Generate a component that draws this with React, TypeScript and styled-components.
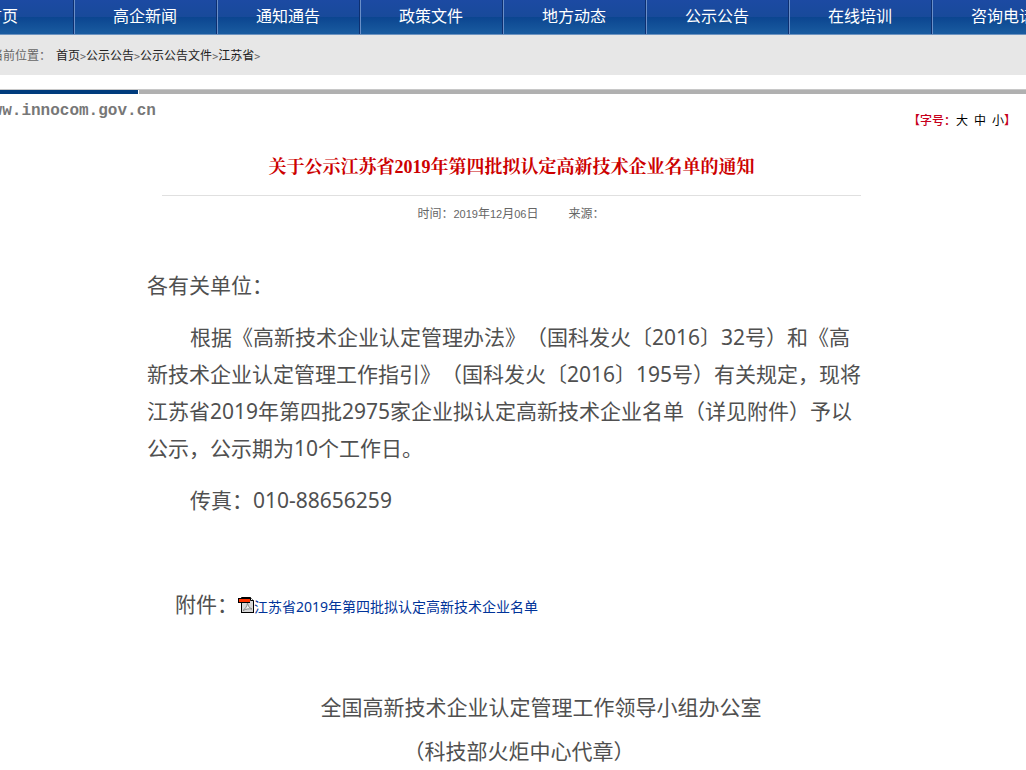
import React from "react";
import styled, { createGlobalStyle } from "styled-components";

const GlobalStyle = createGlobalStyle`
  * { box-sizing: border-box; }
  html { overflow: hidden; }
  body {
    margin: 0;
    background: #fff;
    color: #505050;
    font-family: "Noto Sans", "Noto Sans CJK SC", sans-serif;
    font-size: 12px;
    text-spacing-trim: space-all;
  }
`;

const Page = styled.div`
  overflow: hidden;
`;

const SiteHeader = styled.header`
  margin-left: -69px;
`;

const Nav = styled.nav`
  display: flex;
  height: 35px;
  overflow: hidden;
  background: linear-gradient(#1c4aa3 0, #184a9a 17px, #0b4590 17px, #1a5ca0 34px);
  border-bottom: 1px solid #6d93c0;
`;

const NavLink = styled.a`
  flex: 0 0 143px;
  height: 34px;
  padding-right: 1px;
  border-left: 1px solid #6a8fc8;
  border-right: 1px solid #0d2f70;
  color: #fff;
  font-family: "Noto Sans CJK SC", sans-serif;
  font-size: 16px;
  line-height: 30px;
  text-align: center;
  text-decoration: none;
`;

const Breadcrumb = styled.nav`
  display: flex;
  align-items: baseline;
  height: 40px;
  padding-left: 60px;
  background: #e7e7e7;
  color: #666;
  font-family: "Noto Sans CJK SC", sans-serif;
  font-size: 12px;
  line-height: 40px;
`;

const CrumbLabel = styled.span`
  margin-right: 5px;
`;

const CrumbLink = styled.a`
  color: #222;
  text-decoration: none;
`;

const CrumbArrow = styled.span`
  font-family: "DejaVu Sans Mono", monospace;
  font-size: 10px;
`;

const Rule = styled.div`
  display: flex;
  height: 5px;
  margin-top: 14px;
  border-top: 1px solid #c8c8c8;
  background: #b0b0b0;
`;

const RuleAccent = styled.div`
  flex: 0 0 208px;
  background: #003c7d;
  border-right: 1px solid #fff;
`;

const SiteAddress = styled.div`
  height: 16px;
  padding-left: 52px;
  color: #777;
  font-family: "Liberation Mono", monospace;
  font-size: 16px;
  font-weight: 700;
  line-height: 34px;
`;

const SizePicker = styled.div`
  display: flex;
  justify-content: flex-end;
  padding-right: 10px;
  color: #c7001c;
  font-family: "Noto Sans CJK SC", sans-serif;
  font-size: 12px;
  line-height: 20px;
`;

const SizeLabel = styled.span`
  font-weight: 500;
`;

const SizeOptions = styled.span`
  display: flex;
  gap: 6px;
`;

const SizeButton = styled.button`
  padding: 0;
  border: 0;
  background: none;
  color: #000;
  font: inherit;
  cursor: pointer;
`;

const Article = styled.article`
  max-width: 732px;
  margin: 0 auto;
`;

const Title = styled.h1`
  margin: 22px 18px 0 15px;
  padding-bottom: 13px;
  border-bottom: 1px solid #e0e0e0;
  color: #c00;
  font-family: "Liberation Serif", "Noto Serif CJK SC", "Noto Sans CJK SC", serif;
  font-size: 18px;
  font-weight: 700;
  line-height: 30px;
  text-align: center;
`;

const Meta = styled.div`
  display: flex;
  justify-content: center;
  gap: 30px;
  margin-bottom: 43px;
  padding: 7px 4px 0 0;
  color: #666;
  font-family: "Noto Sans CJK SC", sans-serif;
  line-height: 20px;
`;

const Num = styled.span`
  font-family: "Liberation Sans", sans-serif;
  font-size: 11px;
`;

const Paragraph = styled.p<{ $indent?: boolean }>`
  max-width: 720px;
  margin: 0 0 15px;
  font-size: 21px;
  line-height: 37px;
  text-indent: ${(p) => (p.$indent ? "43px" : "0")};
`;

const Attachment = styled.p`
  display: flex;
  align-items: center;
  margin: 67px 0 66px;
  padding-left: 28px;
  font-size: 21px;
  line-height: 37px;
`;

const FileLink = styled.a`
  display: flex;
  align-items: center;
  color: #003399;
  font-size: 14px;
  line-height: 20px;
  text-decoration: none;
`;

const FileName = styled.span`
  padding-top: 4px;
`;

const Signature = styled.div<{ $shift: number }>`
  padding-left: ${(p) => p.$shift}px;
  margin-bottom: 7px;
  font-size: 21px;
  line-height: 37px;
  text-align: center;
`;

const PdfIcon = () => (
  <svg width="16" height="16" viewBox="0 0 16 16" aria-hidden="true">
    <path d="M3.5 .5h9l3 3v12h-12z" fill="#d8d8d8" stroke="#000" />
    <path d="M12.500 .5v3h3" fill="#fff" stroke="#000" />
    <path d="M5 13.500c2-1.500 4-4 4.500-7.500 .5 3 2 5 4.500 6-3-.5-6 0-9 1.500" fill="#f2f2f2" stroke="#888" />
    <path d="M0 1h12v5h-12z" fill="#000" />
    <path d="M1 2h11v3h-11z" fill="#ff3300" />
    <path d="M3 15.500h13M15.500 4v12" stroke="#000" />
  </svg>
);

const navItems = ["首页", "高企新闻", "通知通告", "政策文件", "地方动态", "公示公告", "在线培训", "咨询电话"];
const crumbs = ["首页", "公示公告", "公示公告文件", "江苏省"];

export default function App() {
  return (
    <Page lang="zh-CN">
      <GlobalStyle />
      <SiteHeader>
        <Nav>
          {navItems.map((item) => (
            <NavLink href="#" key={item}>{item}</NavLink>
          ))}
        </Nav>
        <Breadcrumb>
          <CrumbLabel>当前位置：</CrumbLabel>
          {crumbs.map((crumb) => (
            <React.Fragment key={crumb}>
              <CrumbLink href="#">{crumb}</CrumbLink>
              <CrumbArrow>&gt;</CrumbArrow>
            </React.Fragment>
          ))}
        </Breadcrumb>
        <Rule><RuleAccent /></Rule>
        <SiteAddress>www.innocom.gov.cn</SiteAddress>
      </SiteHeader>
      <SizePicker>
        <SizeLabel>【字号：</SizeLabel>
        <SizeOptions>
          <SizeButton type="button">大</SizeButton>
          <SizeButton type="button">中</SizeButton>
          <SizeButton type="button">小</SizeButton>
        </SizeOptions>
        <SizeLabel>】</SizeLabel>
      </SizePicker>
      <Article>
        <Title>关于公示江苏省2019年第四批拟认定高新技术企业名单的通知</Title>
        <Meta>
          <span>时间：<Num>2019</Num>年<Num>12</Num>月<Num>06</Num>日</span>
          <span>来源：</span>
        </Meta>
        <Paragraph>各有关单位：</Paragraph>
        <Paragraph $indent>
          根据《高新技术企业认定管理办法》（国科发火〔2016〕32号）和《高新技术企业认定管理工作指引》（国科发火〔2016〕195号）有关规定，现将江苏省2019年第四批2975家企业拟认定高新技术企业名单（详见附件）予以公示，公示期为10个工作日。
        </Paragraph>
        <Paragraph $indent>传真：010-88656259</Paragraph>
        <Attachment>
          附件：
          <FileLink href="#">
            <PdfIcon />
            <FileName>江苏省2019年第四批拟认定高新技术企业名单</FileName>
          </FileLink>
        </Attachment>
        <Signature $shift={56}>全国高新技术企业认定管理工作领导小组办公室</Signature>
        <Signature $shift={12}>（科技部火炬中心代章）</Signature>
      </Article>
    </Page>
  );
}
